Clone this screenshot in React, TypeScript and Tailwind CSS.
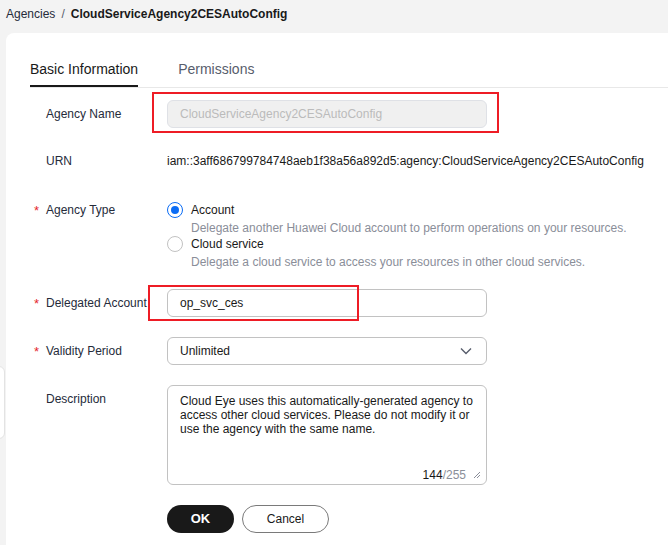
import React from "react";

function Label({ text, required, lh = "leading-[28px]" }: { text: string; required?: boolean; lh?: string }) {
  return (
    <div className="w-[137px] shrink-0 pl-[16px] flex items-start">
      <div className={`relative text-[12px] text-[#252b3a] ${lh}`}>
        {required && (
          <span className={`absolute left-[-12px] top-[1px] text-[#e5262b] text-[13px] ${lh}`}>*</span>
        )}
        {text}
      </div>
    </div>
  );
}

export default function App() {
  return (
    <div className="relative min-h-[545px] w-[668px] overflow-hidden bg-[#f3f3f3] font-['Liberation_Sans',Arial,sans-serif]">
      {/* breadcrumb */}
      <div className="h-[33px] pl-[6px] pt-[6px] text-[12px] leading-[16px] whitespace-nowrap">
        <span className="text-[#252b3a]">Agencies</span>
        <span className="text-[#575d6c] mx-[6px]">/</span>
        <span className="font-bold text-[#191919]">CloudServiceAgency2CESAutoConfig</span>
      </div>

      {/* left floating edge */}
      <div className="absolute left-[-20px] top-[366px] w-[25px] h-[73px] bg-white border border-[#e3e3e3] rounded-[6px]"></div>

      {/* card */}
      <div className="ml-[6px] min-h-[512px] rounded-tl-[8px] bg-white pl-[24px] pt-[19px]">
        {/* tabs */}
        <div className="flex gap-[40px] border-b border-[#e8e8e8] h-[36px]">
          <div className="h-[35px] border-b-2 border-[#191919] text-[14px] leading-[35px] text-[#191919]">Basic Information</div>
          <div className="h-[35px] text-[14px] leading-[35px] text-[#575d6c]">Permissions</div>
        </div>

        {/* form */}
        <div className="pt-[12px]">
          {/* Agency Name */}
          <div className="flex h-[28px]">
            <Label text="Agency Name" />
            <div className="relative">
              <div className="w-[320px] h-[28px] rounded-[6px] border border-[#dfe1e6] bg-[#f0f0f0] pl-[12px] text-[12px] leading-[26px] text-[#bbbbbb]">
                CloudServiceAgency2CESAutoConfig
              </div>
              <div className="absolute left-[-15px] top-[-8px] w-[347px] h-[41px] border-2 border-[#ee1c25]"></div>
            </div>
          </div>

          {/* URN */}
          <div className="flex h-[28px] mt-[19px]">
            <Label text="URN" />
            <div className="text-[12px] leading-[28px] text-[#191919] whitespace-nowrap">
              iam::3aff686799784748aeb1f38a56a892d5:agency:CloudServiceAgency2CESAutoConfig
            </div>
          </div>

          {/* Agency Type */}
          <div className="flex mt-[27px]">
            <Label text="Agency Type" required lh="leading-[16px]" />
            <div className="text-[12px]">
              <div className="flex items-center h-[16px]">
                <span className="w-[16px] h-[16px] rounded-full border border-[#0a6cf5] flex items-center justify-center">
                  <span className="w-[8px] h-[8px] rounded-full bg-[#0a6cf5]"></span>
                </span>
                <span className="ml-[8px] text-[#191919] leading-[16px]">Account</span>
              </div>
              <div className="mt-[2px] h-[16px] leading-[16px] pl-[24px] text-[#8a8e99] whitespace-nowrap">
                Delegate another Huawei Cloud account to perform operations on your resources.
              </div>
              <div className="flex items-center h-[16px]">
                <span className="w-[16px] h-[16px] rounded-full border border-[#c2c2c2] bg-white"></span>
                <span className="ml-[8px] text-[#191919] leading-[16px]">Cloud service</span>
              </div>
              <div className="mt-[2px] h-[16px] leading-[16px] pl-[24px] text-[#8a8e99] whitespace-nowrap">
                Delegate a cloud service to access your resources in other cloud services.
              </div>
            </div>
          </div>

          {/* Delegated Account */}
          <div className="flex h-[28px] mt-[19px]">
            <Label text="Delegated Account" required />
            <div className="relative">
              <div className="w-[320px] h-[28px] rounded-[6px] border border-[#c2c2c2] bg-white pl-[12px] text-[12px] leading-[26px] text-[#191919]">
                op_svc_ces
              </div>
              <div className="absolute left-[-19px] top-[-4px] w-[211px] h-[36px] border-2 border-[#ee1c25]"></div>
            </div>
          </div>

          {/* Validity Period */}
          <div className="flex h-[28px] mt-[20px]">
            <Label text="Validity Period" required />
            <div className="w-[320px] h-[28px] rounded-[6px] border border-[#c2c2c2] bg-white pl-[12px] pr-[14px] flex items-center justify-between text-[12px] text-[#191919]">
              <span>Unlimited</span>
              <svg width="12" height="8" viewBox="0 0 12 8" fill="none">
                <path d="M1 1.5 L6 6.5 L11 1.5" stroke="#575d6c" strokeWidth="1.4" />
              </svg>
            </div>
          </div>

          {/* Description */}
          <div className="flex mt-[20px]">
            <Label text="Description" />
            <div className="relative w-[320px] h-[100px] rounded-[6px] border border-[#c2c2c2] bg-white pl-[12px] pt-[8px] text-[12px] leading-[14px] text-[#191919] whitespace-nowrap">
              <div>Cloud Eye uses this automatically-generated agency to</div>
              <div>access other cloud services. Please do not modify it or</div>
              <div>use the agency with the same name.</div>
              <div className="absolute right-[20px] bottom-[1px] text-[12px] leading-[16px]">
                <span className="text-[#191919]">144</span>
                <span className="text-[#8a8e99]">/255</span>
              </div>
              <svg className="absolute right-[5px] bottom-[5px]" width="8" height="8" viewBox="0 0 8 8" fill="none">
                <path d="M1 7 L7 1 M4 7 L7 4" stroke="#8a8e99" strokeWidth="1" />
              </svg>
            </div>
          </div>

          {/* buttons */}
          <div className="flex mt-[20px] pl-[137px] gap-[8px]">
            <button className="w-[67px] h-[28px] rounded-full bg-[#191919] text-white text-[13px] font-bold">OK</button>
            <button className="w-[87px] h-[28px] rounded-full border border-[#7a7a7a] bg-white text-[#191919] text-[12px]">Cancel</button>
          </div>
        </div>
      </div>
    </div>
  );
}
